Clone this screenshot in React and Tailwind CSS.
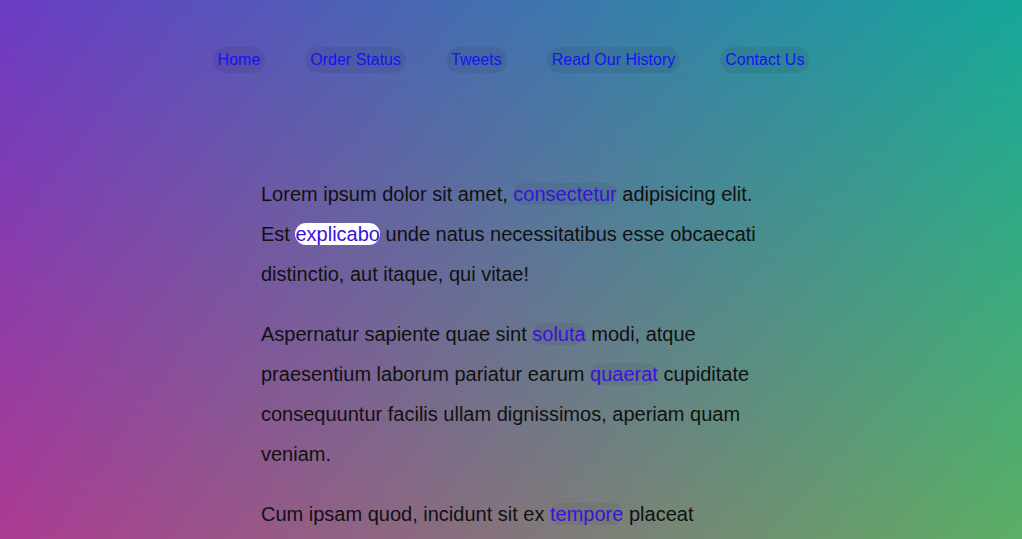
import React from "react";

const navItems = ["Home", "Order Status", "Tweets", "Read Our History", "Contact Us"];

function A({ children, active }) {
  return (
    <a
      href="#"
      className={
        active
          ? "rounded-full bg-white text-[#3b12d9]"
          : "rounded-full bg-black/[0.05] text-[#3b12d9]"
      }
    >
      {children}
    </a>
  );
}

export default function App() {
  return (
    <div
      className="relative min-h-screen overflow-hidden"
      style={{ fontFamily: '"Liberation Sans", Arial, sans-serif' }}
    >
      <div className="absolute inset-0 bg-[linear-gradient(to_right,#b83b8a,#68b05c)]" />
      <div className="absolute inset-0 bg-[linear-gradient(to_right,#6a3cc4,#15a79a)] [mask-image:linear-gradient(to_bottom,black,transparent)]" />
      <div className="relative">
        <nav className="flex justify-center gap-[40px] pt-[47px]">
          {navItems.map((n) => (
            <a
              key={n}
              href="#"
              className="rounded-full bg-black/[0.07] px-[5px] py-[4px] text-[16px] leading-[18px] text-[#1414f5]"
            >
              {n}
            </a>
          ))}
        </nav>
        <main className="mx-auto mt-[101px] w-[500px] text-[20px] leading-[40px] text-[#111]">
          <p className="mb-[20px]">
            Lorem ipsum dolor sit amet, <A>consectetur</A> adipisicing elit. Est{" "}
            <A active>explicabo</A> unde natus necessitatibus esse obcaecati distinctio, aut
            itaque, qui vitae!
          </p>
          <p className="mb-[20px]">
            Aspernatur sapiente quae sint <A>soluta</A> modi, atque praesentium laborum
            pariatur earum <A>quaerat</A> cupiditate consequuntur facilis ullam dignissimos,
            aperiam quam veniam.
          </p>
          <p className="mb-[20px]">
            Cum ipsam quod, incidunt sit ex <A>tempore</A> placeat consequatur, repellendus
            aliquid maiores nemo vero distinctio.
          </p>
        </main>
      </div>
    </div>
  );
}
